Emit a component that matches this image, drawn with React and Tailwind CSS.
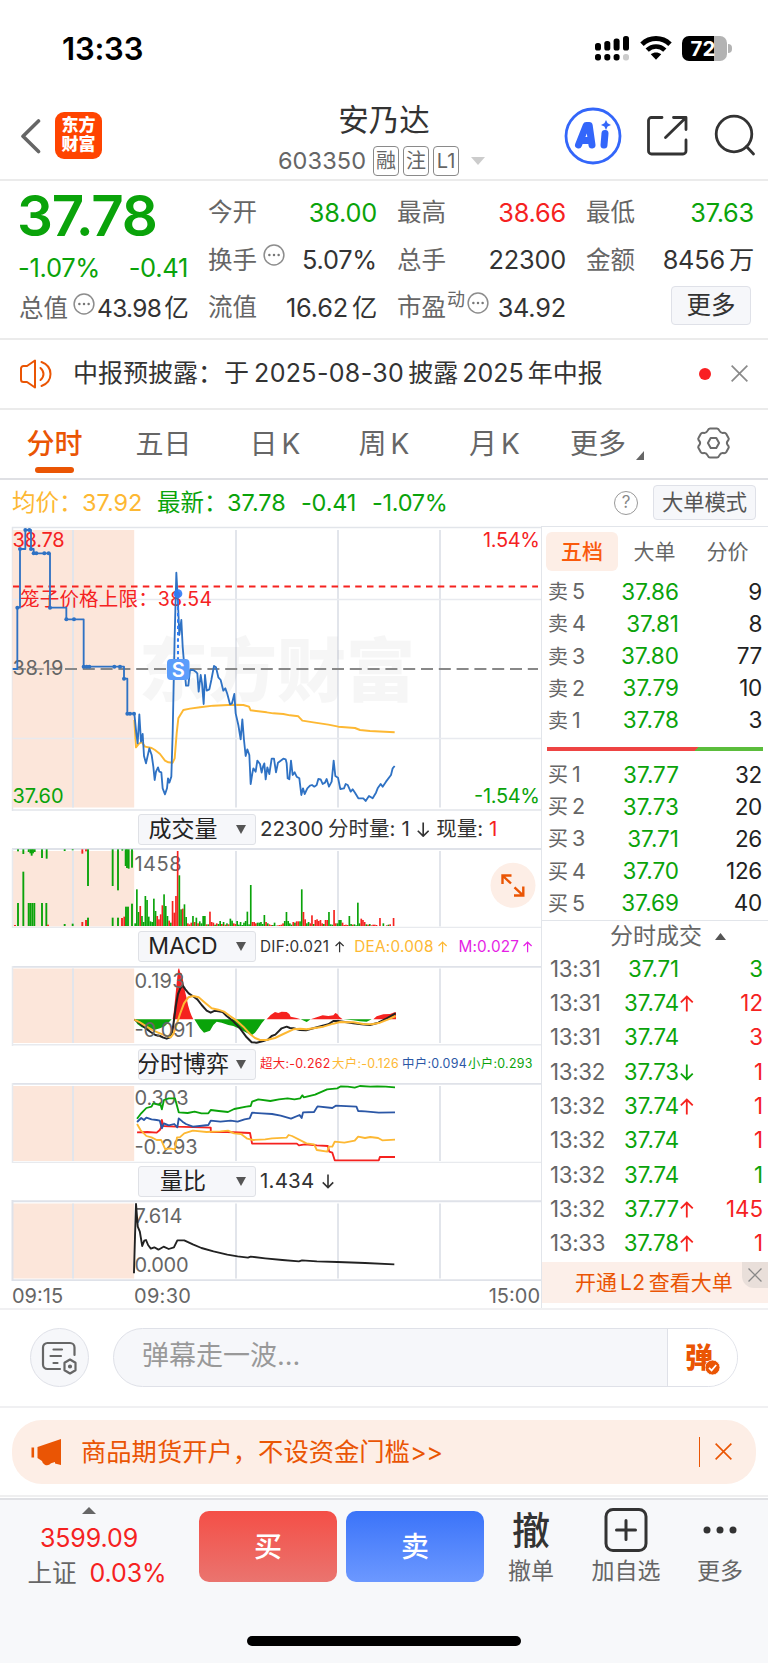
import React from "react";

const GREEN = "#0aa30a";
const RED = "#f5221f";

/* ---------- icons ---------- */

function Signal() {
  return (
    <svg width="34" height="25" viewBox="0 0 34 25">
      {[0, 9.3, 18.6, 28].map((x, i) => {
        const top = [7, 5, 2.6, 0][i];
        return <rect key={x} x={x} y={top} width="6" height={14.5 - top} rx="2.6" fill="#000" />;
      })}
      {[0, 9.3, 18.6, 28].map((x, i) => (
        <rect key={x} x={x} y="18" width="6" height="6.4" rx="2.6" fill={i === 3 ? "#ccc" : "#000"} />
      ))}
    </svg>
  );
}

function Wifi() {
  return (
    <svg width="32" height="24" viewBox="0 0 32 24" fill="none" stroke="#000">
      <path d="M2 8.2C10 .6 22 .6 30 8.2" strokeWidth="5" />
      <path d="M7.2 14.2c5-4.9 12.600-4.900 17.600 0" strokeWidth="4.600" />
      <path d="M10.800 18.300c3-2.500 7.400-2.500 10.400 0L16 23.800z" fill="#000" stroke="none" />
    </svg>
  );
}

function MoreDots() {
  return (
    <svg width="22" height="22" viewBox="0 0 22 22" className="shrink-0">
      <circle cx="11" cy="11" r="9.900" fill="none" stroke="#8d8d8d" strokeWidth="1.500" />
      <circle cx="6.400" cy="11" r="1.250" fill="#777" />
      <circle cx="11" cy="11" r="1.250" fill="#777" />
      <circle cx="15.600" cy="11" r="1.250" fill="#777" />
    </svg>
  );
}

function Cross({ size, color, w = 1.6 }) {
  return (
    <svg width={size} height={size} viewBox="0 0 16 16" fill="none" stroke={color} strokeWidth={w}>
      <path d="M.6.6l14.800 14.800M15.400.6L.6 15.400" />
    </svg>
  );
}

function Gear() {
  return (
    <svg width="33" height="32" viewBox="0 0 33 32" fill="none" stroke="#6b6b6b" strokeWidth="2" strokeLinejoin="round">
      <path d="M13 1.500h7c1.300 0 1.900 1 2.400 2.200.7 1.500 2 2.400 3.700 2.200 1.400-.2 2.500-.2 3.200 1l2.200 4c.7 1.200.1 2.100-.8 3.100-1 1.200-1 2.800 0 4 .9 1 1.500 1.900.8 3.100l-2.200 4c-.7 1.200-1.800 1.200-3.200 1-1.700-.2-3 .7-3.700 2.200-.5 1.200-1.100 2.200-2.400 2.200h-7c-1.300 0-1.900-1-2.400-2.200-.7-1.500-2-2.400-3.700-2.200-1.400.2-2.500.2-3.200-1l-2.200-4c-.7-1.200-.1-2.100.8-3.100 1-1.200 1-2.800 0-4-.9-1-1.500-1.900-.8-3.100l2.200-4c.7-1.200 1.800-1.200 3.200-1 1.700.2 3-.7 3.700-2.200.5-1.200 1.100-2.200 2.400-2.200z" />
      <path d="M13.700 11h5.600l2.800 5-2.800 5h-5.600l-2.800-5z" />
    </svg>
  );
}

function Arrow({ up, color, size = 16 }) {
  return (
    <svg width={size * 0.8} height={size} viewBox="0 0 12.800 16" fill="none" stroke={color} strokeWidth="1.700" className="shrink-0">
      {up ? <path d="M6.400 15.600V1.400M.8 7l5.600-5.600L12 7" /> : <path d="M6.400.4v14.200M.8 9l5.600 5.600L12 9" />}
    </svg>
  );
}

/* ---------- header ---------- */

function StatusBar() {
  return (
    <div className="flex h-[98px] items-center pl-[62px] pr-[36px]">
      <div className="text-[31px] font-semibold leading-none tracking-[-0.200px] text-black">13:33</div>
      <div className="ml-auto flex items-center">
        <Signal />
        <div className="ml-[11px] mt-[-1px]"><Wifi /></div>
        <div className="ml-[10px] flex h-[25px] w-[45px] items-center justify-center overflow-hidden rounded-[7px] bg-[linear-gradient(90deg,#000_72%,#b3b3b3_72%)] pr-[3px] text-[20.500px] font-bold leading-none text-white">72</div>
        <div className="ml-[1px] h-[9px] w-[4px] rounded-r-full bg-[#b3b3b3]" />
      </div>
    </div>
  );
}

function TitleBar() {
  return (
    <div className="flex h-[83px] border-b-2 border-[#ebebeb] pl-[20px]">
      <div className="flex w-[244px] pt-[14px]">
        <svg width="21" height="48" viewBox="0 0 21 48" fill="none" stroke="#666" strokeWidth="3.600" strokeLinecap="round">
          <path d="M18.500 9L3 24.300 18.500 39.500" strokeLinejoin="round" />
        </svg>
        <div className="ml-[14px] flex h-[47px] w-[47px] flex-col items-center justify-center rounded-[9px] bg-[#ff4400] text-[17px] font-black leading-[19.500px] text-white">
          <span>东方</span>
          <span>财富</span>
        </div>
      </div>
      <div className="flex w-[240px] flex-col items-center">
        <div className="mt-[5px] text-[30.500px] leading-[34px] text-[#333]">安乃达</div>
        <div className="mt-[9px] flex h-[30px] items-center gap-[4px] pr-[5px] text-[#666]">
          <span className="mr-[3px] text-[23.500px] leading-none tracking-[0.1px]">603350</span>
          {["融", "注", "L1"].map((t) => (
            <span key={t} className="flex h-[30px] w-[26px] items-center justify-center rounded-[4px] border-[1.500px] border-[#8a8a8a] text-[20px] leading-none">{t}</span>
          ))}
          <svg width="14" height="8" viewBox="0 0 14 8" className="ml-[8px]"><path d="M0 0h14L7 8z" fill="#ccc" /></svg>
        </div>
      </div>
      <div className="flex w-[264px] pl-[60px] pt-[9px]">
        <svg width="58" height="58" viewBox="0 0 58 58" fill="none" className="shrink-0">
          <circle cx="29" cy="29" r="27" stroke="#3366fa" strokeWidth="2.800" />
          <g stroke="#3366fa" strokeWidth="7" strokeLinejoin="round" strokeLinecap="round">
            <path d="M14.500 38l7.700-19.500h3l2.800 19.500M19.500 33.500h7" />
            <path d="M41 26.500l-1 11.500" />
          </g>
          <path d="M42 13l1.600 3.300 3.400 1.600-3.400 1.700-1.600 3.300-1.600-3.300-3.400-1.700 3.400-1.600z" fill="#3366fa" />
        </svg>
        <svg width="42" height="42" viewBox="0 0 42 42" className="ml-[24px] mt-[8px] shrink-0" fill="none" stroke="#333" strokeWidth="2.800" strokeLinecap="round" strokeLinejoin="round">
          <path d="M16 2.500H5.500a3 3 0 0 0-3 3v30.500a3 3 0 0 0 3 3H37a3 3 0 0 0 3-3V25" />
          <path d="M27.500 2.500H40V14.500M39.500 3L19.500 22.500" />
        </svg>
        <svg width="42" height="42" viewBox="0 0 42 42" className="ml-[26px] mt-[7px] shrink-0" fill="none" stroke="#333" strokeWidth="2.800" strokeLinecap="round">
          <circle cx="20" cy="20" r="17.800" />
          <path d="M32.500 32.500l7 7.500" />
        </svg>
      </div>
    </div>
  );
}

function Field({ label, value, color = "text-[#333]", icon, sup }) {
  return (
    <div className="flex h-[47.500px] items-center whitespace-nowrap">
      <span className="text-[24.500px] leading-none text-[#666]">{label}</span>
      {sup && <span className="mb-[15px] ml-[1px] text-[18px] leading-none text-[#666]">{sup}</span>}
      {icon && <span className={sup ? "mb-[9px] ml-[2px]" : "mb-[9px] ml-[6px]"}><MoreDots /></span>}
      <span className={"ml-auto text-[25.300px] leading-none tracking-[-0.2px] " + color}>{value}</span>
    </div>
  );
}

function Quote() {
  return (
    <div className="grid h-[160px] grid-cols-[169px_169px_169px_168px] gap-x-5 border-b-2 border-[#ebebeb] pl-[19px] pt-[8px]">
      <div className="flex flex-col whitespace-nowrap">
        <div className="ml-[-2px] flex h-[56px] items-center text-[56.500px] font-semibold leading-none tracking-[-1.300px] text-[#0aa30a]">37.78</div>
        <div className="ml-[-1px] flex h-[46px] items-center justify-between text-[25.500px] leading-none tracking-[-0.300px] text-[#0aa30a]">
          <span>-1.07%</span>
          <span>-0.41</span>
        </div>
        <div className="flex h-[36px] items-center">
          <span className="text-[24.500px] leading-none text-[#666]">总值</span>
          <span className="mb-[9px] ml-[5px]"><MoreDots /></span>
          <span className="ml-auto text-[24.500px] leading-none tracking-[-0.700px] text-[#333]">43.98<span className="ml-[3px]">亿</span></span>
        </div>
      </div>
      <div>
        <Field label="今开" value="38.00" color="text-[#0aa30a]" />
        <Field label="换手" value="5.07%" icon />
        <Field label="流值" value={<>16.62<span className="ml-[4px]">亿</span></>} />
      </div>
      <div>
        <Field label="最高" value="38.66" color="text-[#f5221f]" />
        <Field label="总手" value="22300" />
        <Field label="市盈" value="34.92" icon sup="动" />
      </div>
      <div>
        <Field label="最低" value="37.63" color="text-[#0aa30a]" />
        <Field label="金额" value={<>8456<span className="ml-[4px]">万</span></>} />
        <button className="ml-auto mr-[3px] mt-[2px] flex h-[39px] w-[80px] items-center justify-center rounded-[4px] border-[1.500px] border-[#dfe1e8] bg-[#f6f7fa] text-[24.500px] leading-none text-[#333]">更多</button>
      </div>
    </div>
  );
}

function Notice() {
  return (
    <div className="flex h-[70px] items-center whitespace-nowrap border-b-2 border-[#ebebeb] pb-px pl-[19px] pr-[20px]">
      <svg width="34" height="30" viewBox="0 0 34 30" fill="none" stroke="#ea5504" strokeWidth="2" strokeLinejoin="round" strokeLinecap="round">
        <path d="M8 7L16 1.500v27L8 23H4.500a2.500 2.500 0 0 1-2.500-2.500v-11A2.500 2.500 0 0 1 4.500 7z" />
        <path d="M21.500 9c4 3.500 4 8.500 0 12" />
        <path d="M22.500 3c12 4.500 12 19.500 0 24" />
      </svg>
      <div className="ml-[20px] flex items-center text-[25px] leading-none text-[#333]">
        <span>中报预披露：</span>
        <span className="ml-[1px]">于</span>
        <span className="ml-[5px] tracking-[0.350px]">2025-08-30</span>
        <span className="ml-[4px]">披露</span>
        <span className="ml-[4px]">2025</span>
        <span className="ml-[4px]">年中报</span>
      </div>
      <div className="ml-auto mr-[20px] h-[12px] w-[12px] rounded-full bg-[#f91f22]" />
      <Cross size={17} color="#8a8a8a" />
    </div>
  );
}

function Tabs() {
  return (
    <div className="flex h-[70px] border-b-2 border-[#dfe0e4] pt-[16px] text-[28px] leading-[36px] text-[#666]">
      <div className="flex w-[109px] flex-col items-center font-medium text-[#ea5504]">
        分时
        <div className="mt-[5px] h-[6px] w-[39px] rounded-full bg-[#ea5504]" />
      </div>
      <div className="w-[109px] text-center">五日</div>
      <div className="w-[114px] text-center">日<span className="ml-[4px]">K</span></div>
      <div className="w-[104px] text-center">周<span className="ml-[4px]">K</span></div>
      <div className="w-[117px] text-center">月<span className="ml-[4px]">K</span></div>
      <div className="ml-[17px] flex w-[126px]">
        更多
        <svg width="8" height="9" viewBox="0 0 8 9" className="ml-[10px] mt-[25px]"><path d="M8 0v9H0z" fill="#666" /></svg>
      </div>
      <div className="ml-[1px] mt-[1px]"><Gear /></div>
    </div>
  );
}

function InfoRow() {
  return (
    <div className="flex h-[46px] items-center whitespace-nowrap pl-[12px] pr-[12px] text-[23.500px] leading-none text-[#0aa30a]">
      <span className="w-[70px] text-[#fdb833]">均价：</span>
      <span className="w-[75px] text-[#fdb833]">37.92</span>
      <span className="w-[70px]">最新：</span>
      <span className="w-[74px]">37.78</span>
      <span className="w-[71px] tracking-[-0.200px]">-0.41</span>
      <span className="tracking-[-0.300px]">-1.07%</span>
      <span className="ml-auto mr-[15px] flex h-[24px] w-[24px] items-center justify-center rounded-full border-[1.500px] border-[#999] text-[17px] text-[#888]">?</span>
      <button className="flex h-[35px] w-[103px] items-center justify-center rounded-[4px] border-[1.500px] border-[#dfe1e8] bg-[#f6f7fa] text-[21.300px] text-[#555]">大单模式</button>
    </div>
  );
}

/* ---------- charts ---------- */

const PRE =
  "38,447 52,447 52,263 60,263 60,87 76,87 76,30 93,30 93,87 101,87 101,100 150,100 150,263 199,263 199,298 251,298 251,440 372,440 372,476 382,476 382,581 403,581";
const PRE_DOTS = [[52, 263], [60, 87], [76, 30], [88, 30], [93, 87], [101, 100], [109, 100], [133, 100], [146, 100], [150, 263], [199, 298], [222, 298], [251, 440], [260, 440], [268, 440], [343, 440], [360, 440], [372, 476], [382, 581], [390, 581], [402, 581]];
const PRICE =
  "403,581 405,600 409,640 413,670 418,583 423,665 428,642 432,708 438,730 448,685 455,705 460,740 464,780 468,755 474,742 478,755 484,757 488,805 495,823 501,805 504,775 508,788 514,770 518,640 524,350 529,158 534,250 538,345 544,300 548,380 553,440 558,497 565,497 570,450 580,450 587,455 592,460 596,515 602,465 606,490 611,552 615,465 620,512 628,508 634,480 642,438 648,442 655,472 662,480 670,512 676,505 682,522 690,553 696,550 703,522 707,580 715,615 722,658 727,598 732,660 737,708 742,688 748,705 752,792 757,760 760,745 767,755 772,722 780,732 785,758 789,740 793,730 797,778 802,742 808,762 815,716 822,716 828,757 834,728 842,722 850,716 857,718 860,730 863,775 868,778 873,722 878,765 884,757 890,770 898,775 904,825 909,805 914,822 922,805 930,797 936,795 943,800 950,795 955,777 962,778 968,792 975,788 980,777 987,800 995,785 1001,722 1006,768 1014,773 1021,807 1032,805 1037,792 1043,795 1052,815 1058,808 1065,818 1075,835 1090,835 1097,843 1107,828 1118,835 1128,818 1133,805 1142,792 1148,800 1158,785 1173,765 1178,745 1184,738";
const AVG =
  "403,600 408,682 415,673 425,666 435,680 455,684 465,690 480,702 495,722 505,727 518,728 524,715 530,640 535,595 550,570 570,566 600,562 640,557 700,554 730,555 747,560 752,571 800,577 820,580 850,582 870,586 895,589 907,602 945,608 985,614 1015,620 1065,624 1080,630 1110,633 1184,637";

function Grid({ top, bottom }) {
  return (
    <g>
      <rect x="12.500" y={top} width="121.700" height={bottom - top} fill="#fce6da" />
      <g fill="#e2e5eb">
        {[72, 235, 337, 439].map((x) => (
          <rect key={x} x={x} y={top} width="2" height={bottom - top} />
        ))}
      </g>
    </g>
  );
}

function Label({ x, y, fill = "#666", children, end, size = 20, len }) {
  return (
    <text x={x} y={y} fill={fill} fontSize={size} textAnchor={end ? "end" : "start"} textLength={len} lengthAdjust="spacing">
      {children}
    </text>
  );
}

function PriceChart() {
  return (
    <svg width="542" height="285" viewBox="0 526 542 285" className="block">
      <path d="M12.500 811V527.500H542" fill="none" stroke="#e2e5ea" strokeWidth="1.500" />
      <Grid top={530} bottom={807.500} />
      <path d="M13 599.500H542M13 738.500H542" stroke="#e8eaef" strokeWidth="1.500" />
      <path d="M12 810H542" stroke="#e2e5ea" strokeWidth="1.500" />
      <text x="139" y="696" fontSize="69" fontWeight="900" fill="#000" opacity="0.030">东方财富</text>
      <path d="M13 586.500H538" stroke={RED} strokeWidth="2" strokeDasharray="6.500 5.300" />
      <path d="M65 669H538" stroke="#888" strokeWidth="2" strokeDasharray="12 5.800" />
      <path d="M14 669H64" stroke="#888" strokeWidth="1.500" strokeDasharray="12 5.800" />
      <Label x={12.500} y={547} fill={RED} len={52}>38.78</Label>
      <Label x={540} y={547} fill={RED} end len={57}>1.54%</Label>
      <Label x={12.500} y={675} len={51}>38.19</Label>
      <Label x={12.500} y={803} fill={GREEN} len={51}>37.60</Label>
      <Label x={540} y={803} fill={GREEN} end len={66}>-1.54%</Label>
      <Label x={20} y={606} fill={RED} size={19.500} len={192}>笼子价格上限：38.54</Label>
      <g transform="translate(0 520) scale(.33333)" fill="none" strokeLinejoin="round">
        <polyline points={AVG} stroke="#fdb833" strokeWidth="5.800" />
        <polyline points={PRE} stroke="#2f72c4" strokeWidth="5.500" />
        <g fill="#2f72c4">
          {PRE_DOTS.map(([x, y]) => <circle key={x + "-" + y} cx={x} cy={y} r="6" />)}
        </g>
        <polyline points={PRICE} stroke="#2f72c4" strokeWidth="5.500" />
        <path d="M534 222V420" stroke="#2f7df5" strokeWidth="6" strokeDasharray="10 9" />
        <circle cx="534" cy="221" r="13" fill="#2f7df5" opacity=".9" />
      </g>
      <rect x="167" y="659" width="22.500" height="21" rx="4" fill="#5b9dfb" />
      <text x="178.200" y="676.500" fontSize="20" fontWeight="600" fill="#fff" textAnchor="middle">S</text>
    </svg>
  );
}

/* one bar a minute from the open; negative heights are red */
const VOL = [
  8, 110, 42, -60, 30, 12, 90, 78, 28, 14, 12, 82, 45, -30, -20, -35, -62, 95, 60, 30, -16, 10, -75, -40, -90, -225, 152, 50, -52, 65,
  27, -8, -5, -10, 30, -12, 25, -8, 14, 8, 30, 30, -5, 5, -43, -12, -10, 4, -8, 6, 15, -6, 12, -4, 8, -5, 22, 16, -8, -6,
  15, 4, 12, 3, 10, 15, 43, 5, 123, -12, -12, -8, 10, 10, 12, 6, 33, -12, 8, -5, -3, 3, 10, 1, -2, -3, -4, -8, 15, 42,
  15, 8, 4, -12, 10, -14, -14, 14, 110, -42, -20, 8, 12, -8, -32, 6, -18, -20, -15, -18, -8, 6, -18, -18, 42, 5, 4, -48, -8, 8,
  18, 18, -10, -3, -4, -3, 30, 6, -4, 5, 2, 70, 8, -22, -18, -12, 5, -4, 6, -2, -4, -4, -3, 0, -24, 0, 8, 0, -2, 4, -5, 0, -24,
];
const PRE_TOP = [[54, 6], [70, 14], [86, 8], [91, 12], [95, 19], [99, 12], [104, 8], [126, 26], [140, 28], [194, 5], [218, 3], [247, -13], [258, -6], [264, 110], [338, 110], [354, 123], [367, 4], [377, 50], [381, 56], [386, 58], [396, 55]];
const PRE_BOTTOM = [[45, -3], [54, 69], [70, 163], [86, 69], [91, 69], [97, 69], [103, 69], [126, 69], [139, 69], [144, -4], [194, 6], [218, 7], [247, -12], [258, -18], [264, 25], [338, 25], [354, 25], [366, -24], [373, -28], [378, 58], [384, 58], [396, 67]];

function VolumeChart() {
  const c = (v) => (v < 0 ? RED : GREEN);
  return (
    <svg width="542" height="80" viewBox="0 848 542 80" className="block">
      <path d="M12 849H542" stroke="#dfe2e9" strokeWidth="2" />
      <Grid top={851} bottom={926.500} />
      <path d="M12.500 849V928M12 927.500H542" fill="none" stroke="#e8eaee" strokeWidth="1.500" />
      <Label x={134.500} y={870.500} len={47}>1458</Label>
      <g transform="translate(0 810) scale(.33333)">
        {PRE_TOP.map(([x, h]) => <rect key={x} x={x - 2.800} y="118" width="5.600" height={Math.abs(h)} fill={c(h)} />)}
        {PRE_BOTTOM.map(([x, h]) => <rect key={x} x={x - 2.800} y={348 - Math.abs(h)} width="5.600" height={Math.abs(h)} fill={c(h)} />)}
        {VOL.map((h, i) => <rect key={i} x={403 + 5.1 * i} y={348 - Math.abs(h)} width="5" height={Math.abs(h)} fill={c(h)} />)}
      </g>
      <circle cx="513" cy="885.300" r="22.500" fill="#fdeee6" />
      <g fill="none" stroke="#ea5504" strokeWidth="2.400">
        <path d="M511.500 875.500H502.500V884M502.500 875.500l8.500 8M514 895.500H523.300V886.500M523 895.300l-8.500-8" />
      </g>
    </svg>
  );
}

function MacdChart() {
  return (
    <svg width="542" height="80" viewBox="0 966 542 80" className="block">
      <path d="M12 966.800H542" stroke="#dfe2e9" strokeWidth="2" />
      <Grid top={968.500} bottom={1043} />
      <path d="M12.500 966V1046M12 1044.800H542" fill="none" stroke="#e8eaee" strokeWidth="1.500" />
      <g transform="translate(0 810) scale(.33333)" fill="none" strokeLinejoin="round">
        <path d="M403 628H515L505 638 495 648 480 655 462 660 445 658 425 652 412 642z" fill={GREEN} />
        <path d="M518 628L522 600 526 560 530 520 534 480 537 474 541 488 545 490 549 510 552 530 556 548 560 565 564 585 570 605 575 618 580 628z" fill={RED} />
        <path d="M583 628H795L785 640 775 655 765 668 755 676 740 668 715 655 700 648 685 645 665 638 650 635 640 645 630 662 612 668 600 655z" fill={GREEN} />
        <path d="M800 628L812 615 825 606 835 609 845 605 860 606 868 612 872 620 890 624 902 628z" fill={RED} />
        <path d="M902 628H932L920 636z" fill={GREEN} />
        <path d="M932 628L950 622 968 616 985 618 1000 616 1006 609 1012 612 1018 620 1028 628z" fill={RED} />
        <path d="M1030 628H1115L1100 635 1080 634 1060 631z" fill={GREEN} />
        <path d="M1120 628L1130 619 1150 613 1170 612 1184 607 1188 607V628z" fill={RED} />
        <path d="M403 629L415 636 425 645 437 655 452 666 466 675 480 678 490 683 500 686 510 682 517 665 522 630 528 585 534 552 541 535 548 526 556 538 566 550 578 558 592 568 605 585 620 602 632 608 645 602 655 604 668 606 680 618 700 634 720 655 740 682 755 697 770 698 790 693 805 688 815 678 826 674 845 655 860 650 870 654 880 655 900 660 918 661 940 655 965 648 985 643 1000 633 1015 633 1035 636 1060 640 1085 643 1110 645 1135 638 1160 625 1187 610" stroke="#222" strokeWidth="6" />
        <path d="M403 629L420 637 440 650 460 662 480 670 500 678 512 682 520 672 528 650 540 612 552 580 565 562 580 558 596 562 615 578 635 595 655 599 672 605 690 618 710 632 730 650 750 672 765 684 780 690 800 690 825 684 850 672 880 658 900 656 920 658 945 654 970 650 1000 641 1020 636 1060 637 1090 642 1115 643 1140 638 1165 628 1187 618" stroke="#fdb833" strokeWidth="6" />
      </g>
      <Label x={134.500} y={987.500} len={50}>0.193</Label>
      <Label x={134.500} y={1036.500} len={59}>-0.091</Label>
    </svg>
  );
}

function GameChart() {
  return (
    <svg width="542" height="80" viewBox="0 1083 542 80" className="block">
      <path d="M12 1083.800H542" stroke="#dfe2e9" strokeWidth="2" />
      <Grid top={1086} bottom={1161} />
      <path d="M12.500 1083V1163M12 1162.500H542" fill="none" stroke="#e8eaee" strokeWidth="1.500" />
      <Label x={134.500} y={1105} len={54}>0.303</Label>
      <Label x={134.500} y={1154} len={63}>-0.293</Label>
      <g transform="translate(0 1050) scale(.34438 .33333)" fill="none" strokeWidth="5.400" strokeLinejoin="round">
        <polyline stroke={RED} points="398,247 428,246 455,248 464,240 468,232 470,210 474,228 510,230 612,233 612,246 660,246 726,249 732,281 862,281 868,286 885,283 920,286 952,288 956,305 965,308 972,331 1100,331 1103,321 1147,321" />
        <polyline stroke="#fdb833" points="398,222 408,240 425,258 440,262 455,270 468,270 480,298 492,295 508,298 514,262 522,262 535,250 560,242 600,246 640,244 662,242 680,250 700,252 718,266 735,270 770,268 790,265 832,263 838,255 848,258 890,280 912,283 920,300 950,305 955,290 965,290 972,275 1000,278 1030,272 1040,260 1060,264 1075,261 1098,264 1110,271 1147,269" />
        <polyline stroke="#2b57a6" points="398,216 410,204 418,210 425,203 440,208 455,210 464,212 470,235 476,220 490,226 506,222 515,232 519,205 530,215 540,222 560,230 580,228 605,225 612,212 640,215 670,212 690,215 710,208 725,205 732,188 760,190 790,192 815,197 845,206 870,195 876,204 880,187 912,186 922,169 965,174 975,167 1035,170 1040,183 1060,184 1100,188 1147,187" />
        <polyline stroke={GREEN} points="398,206 410,190 425,174 440,170 445,160 462,165 465,160 470,178 476,150 490,145 508,145 519,187 545,189 565,185 585,190 605,190 612,180 635,183 662,186 680,177 715,170 728,168 732,155 750,148 785,153 810,148 835,145 855,148 872,145 878,136 882,142 915,134 950,118 980,115 990,109 1010,110 1030,113 1045,108 1075,110 1095,109 1120,110 1147,112" />
      </g>
    </svg>
  );
}

function RatioChart() {
  return (
    <svg width="542" height="81" viewBox="0 1200 542 81" className="block">
      <path d="M12 1201.300H542" stroke="#dfe2e9" strokeWidth="2" />
      <Grid top={1203.500} bottom={1278.500} />
      <path d="M12.500 1200V1281M12 1280.300H542" fill="none" stroke="#dfe2e9" strokeWidth="2" />
      <Label x={134.500} y={1222.500} len={48}>7.614</Label>
      <Label x={134.500} y={1272} len={54}>0.000</Label>
      <g transform="translate(0 1050) scale(.34438 .33333)" fill="none" strokeWidth="5.500" stroke="#222" strokeLinejoin="round">
        <polyline points="389,670 392,560 395,462 400,530 406,545 413,588 419,572 424,570 430,585 438,596 448,592 460,599 475,590 490,597 505,592 515,571 535,571 560,583 585,594 620,604 660,614 690,619 720,623 728,620 770,625 820,630 868,634 877,631 920,634 980,636 1060,639 1145,643" />
      </g>
    </svg>
  );
}

function Select({ children }) {
  return (
    <div className="ml-[138px] flex h-[31px] w-[118px] shrink-0 items-center justify-between overflow-hidden whitespace-nowrap rounded-[3px] border-[1.500px] border-[#dfe1e6] bg-[#f6f7fa] pr-[9px] text-[23px] leading-none text-[#222]">
      <span className="flex w-[88px] justify-center">{children}</span>
      <svg width="10" height="9" viewBox="0 0 10 9"><path d="M0 0h10L5 9z" fill="#555" /></svg>
    </div>
  );
}

function PanelHead({ title, children, h }) {
  return (
    <div className={"flex items-center whitespace-nowrap leading-none " + h}>
      <Select>{title}</Select>
      {children}
    </div>
  );
}

function Charts() {
  return (
    <div className="w-[541px] shrink-0 overflow-hidden">
      <PriceChart />
      <PanelHead title="成交量" h="h-[37px]">
        <div className="ml-[4px] flex items-center text-[20.500px] text-[#333]">
          <span className="w-[68px]">22300</span>
          <span>分时量:</span>
          <span className="ml-[6px] mr-[7px]">1</span>
          <Arrow color="#333" size={15.500} />
          <span className="ml-[7px]">现量:</span>
          <span className="ml-[6px] text-[#f5221f]">1</span>
        </div>
      </PanelHead>
      <VolumeChart />
      <PanelHead title="MACD" h="h-[38px]">
        <div className="ml-[4px] flex items-center text-[15.300px] tracking-[0.250px]">
          <span className="w-[75px] text-[#333]">DIF:0.021</span>
          <Arrow up color="#333" size={11.500} />
          <span className="ml-[10px] w-[84px] text-[#fdb833]">DEA:0.008</span>
          <Arrow up color="#fdb833" size={11.500} />
          <span className="ml-[11px] w-[65px] text-[#e51ee5]">M:0.027</span>
          <Arrow up color="#e51ee5" size={11.500} />
        </div>
      </PanelHead>
      <MacdChart />
      <PanelHead title="分时博弈" h="h-[37px]">
        <div className="ml-[4px] flex items-center text-[12.400px] tracking-[0.300px]">
          <span className="w-[72px] text-[#f5221f]">超大:-0.262</span>
          <span className="w-[70px] text-[#fdb833]">大户:-0.126</span>
          <span className="w-[66px] text-[#2b57a6]">中户:0.094</span>
          <span className="text-[#0aa30a]">小户:0.293</span>
        </div>
      </PanelHead>
      <GameChart />
      <PanelHead title="量比" h="h-[37px]">
        <div className="ml-[4px] flex items-center text-[20.500px] tracking-[0.200px] text-[#333]">
          <span className="mr-[8px]">1.434</span>
          <Arrow color="#333" size={15} />
        </div>
      </PanelHead>
      <RatioChart />
      <div className="flex h-[27px] items-center pl-[12px] text-[20px] leading-none text-[#666]">
        <span className="w-[122px] pt-[4px]">09:15</span>
        <span className="pt-[4px] tracking-[0.300px]">09:30</span>
        <span className="ml-auto pr-[1px] pt-[4px]">15:00</span>
      </div>
    </div>
  );
}

/* ---------- order book ---------- */

const SELLS = [["5", "37.86", "9"], ["4", "37.81", "8"], ["3", "37.80", "77"], ["2", "37.79", "10"], ["1", "37.78", "3"]];
const BUYS = [["1", "37.77", "32"], ["2", "37.73", "20"], ["3", "37.71", "26"], ["4", "37.70", "126"], ["5", "37.69", "40"]];
const TRADES = [
  ["13:31", "37.71", "", "3", 0],
  ["13:31", "37.74", "u", "12", 1],
  ["13:31", "37.74", "", "3", 1],
  ["13:32", "37.73", "d", "1", 1],
  ["13:32", "37.74", "u", "1", 1],
  ["13:32", "37.74", "", "1", 1],
  ["13:32", "37.74", "", "1", 0],
  ["13:32", "37.77", "u", "145", 1],
  ["13:33", "37.78", "u", "1", 1],
];

function Level({ side, row }) {
  return (
    <div className="flex h-[32.200px] items-center pl-[6px] pr-[6px] text-[22.500px] leading-none">
      <span className="w-[50px] text-[20px] text-[#666]">{side}<span className="ml-[4px] text-[21.500px]">{row[0]}</span></span>
      <span className="w-[81px] text-right text-[#0aa30a]">{row[1]}</span>
      <span className="ml-auto tracking-[-0.300px] text-[#222]">{row[2]}</span>
    </div>
  );
}

function OrderBook() {
  return (
    <div className="flex w-[227px] flex-col">
      <div className="h-[394px] border-l-[1.500px] border-t-[1.500px] border-[#e2e5ea]">
        <div className="flex pl-[4px] pt-[5px] text-[21px] leading-[39px] text-[#666]">
          <span className="w-[72px] rounded-[6px] bg-[#fdeee6] text-center font-medium text-[#fa5a0c]">五档</span>
          <span className="w-[73px] text-center">大单</span>
          <span className="w-[73px] text-center">分价</span>
        </div>
        <div className="pt-[5px]">{SELLS.map((r) => <Level key={r[0]} side="卖" row={r} />)}</div>
        <div className="ml-[5px] mt-[10px] h-[4px] w-[216px] bg-[linear-gradient(135deg,#ee4443_69%,#5bbd3c_69%)]" />
        <div className="pt-[8px]">{BUYS.map((r) => <Level key={r[0]} side="买" row={r} />)}</div>
      </div>
      <div className="h-[388px] border-l-[1.500px] border-t-[1.500px] border-[#e2e5ea]">
        <div className="flex h-[31px] items-center pl-[68px] text-[23px] leading-none text-[#666]">
          分时成交
          <svg width="11" height="7" viewBox="0 0 11 7" className="ml-[13px]"><path d="M0 7h11L5.500 0z" fill="#555" /></svg>
        </div>
        {TRADES.map(([t, p, dir, n, red], i) => (
          <div key={i} className="flex h-[34.300px] items-center pl-[8px] pr-[5px] text-[22.300px] leading-none">
            <span className="w-[60px] tracking-[-0.300px] text-[#666]">{t}</span>
            <span className="w-[69px] text-right tracking-[-0.100px] text-[#0aa30a]">{p}</span>
            <span className="ml-[1px] mt-[1px] w-[14px]">{dir && <Arrow up={dir === "u"} color={dir === "u" ? RED : GREEN} size={17} />}</span>
            <span className={red ? "ml-auto text-[#f5221f]" : "ml-auto text-[#0aa30a]"}>{n}</span>
          </div>
        ))}
        <div className="mt-[1px] flex h-[41px] bg-[#fcefe9] text-[#ea5504]">
          <span className="ml-[33px] flex items-center whitespace-nowrap text-[21px] leading-none">开通<span className="mx-[3px] tracking-[0.500px]">L2</span>查看大单</span>
          <span className="ml-auto flex h-[26px] w-[26px] items-center justify-center rounded-bl-[12px] bg-[#e9dfda]"><Cross size={14} color="#888" w={1.500} /></span>
        </div>
      </div>
    </div>
  );
}

/* ---------- bottom ---------- */

function Danmu() {
  return (
    <div className="flex h-[100px] items-center border-y-2 border-[#f0f0f2] pl-[30px]">
      <div className="flex h-[59px] w-[59px] items-center justify-center rounded-full border-[1.500px] border-[#dfe1e8] bg-[#f6f7fa]">
        <svg width="37" height="34" viewBox="0 0 37 34" fill="none" stroke="#666" strokeWidth="2.200" strokeLinecap="round" strokeLinejoin="round">
          <path d="M19 28H6.500a4.500 4.500 0 0 1-4.500-4.500V6.500A4.500 4.500 0 0 1 6.500 2H29a4.500 4.500 0 0 1 4.500 4.500V14" />
          <path d="M12.500 8.500h8.500M9.500 15h10.500M12.500 22h4" />
          <path d="M29 18.500l5.500 3.300v7.400L29 32.500l-5.500-3.300v-7.400z" />
          <circle cx="29" cy="25.500" r="1" fill="#666" />
        </svg>
      </div>
      <div className="ml-[24px] flex h-[59px] w-[625px] overflow-hidden rounded-full border-[1.500px] border-[#dfe1e8] bg-[#f6f7fa]">
        <div className="flex flex-1 items-center pb-[5px] pl-[28px] text-[27px] leading-none text-[#999]">弹幕走一波...</div>
        <div className="flex w-[70px] items-center border-l-[1.500px] border-[#dfe1e8] bg-white pl-[17px]">
          <span className="text-[28px] font-black leading-none text-[#ea5504]">弹</span>
          <svg width="15" height="15" viewBox="0 0 15 15" className="relative left-[-8px] top-[10px]">
            <circle cx="7.500" cy="7.500" r="7.500" fill="#ea5504" stroke="#fff" strokeWidth="0.800" />
            <path d="M4 7.800l2.600 2.600L11.200 5" fill="none" stroke="#fff" strokeWidth="1.700" />
          </svg>
        </div>
      </div>
    </div>
  );
}

function Promo() {
  return (
    <div className="h-[88px] px-[12px] pt-[12px]">
      <div className="flex h-[64px] items-center rounded-[30px] bg-[#fdeee6] pl-[18px] pr-[24px] text-[#ea5504]">
        <svg width="32" height="28" viewBox="0 0 32 28" fill="#ea5504">
          <path d="M1.500 9.500h2.600v10H1.500zM7.500 9L31 1v26l-6-1.500v-1.500l-4 1.200-1.500 1.300a5 5 0 0 1-7.500-3.500L7.500 20z" />
        </svg>
        <span className="ml-[19px] whitespace-nowrap text-[25.300px] leading-none">商品期货开户，不设资金门槛<span className="tracking-[-0.300px]">&gt;&gt;</span></span>
        <span className="ml-auto mr-[15px] h-[30px] w-[1.500px] bg-[#ea5504]" />
        <Cross size={17} color="#ea5504" w={1.500} />
      </div>
    </div>
  );
}

function Action({ icon, label, w }) {
  return (
    <div className={"flex flex-col items-center " + w}>
      <div className="flex h-[46px] items-center justify-center">{icon}</div>
      <div className="mt-[5px] whitespace-nowrap text-[23px] leading-[26px] text-[#666]">{label}</div>
    </div>
  );
}

function Footer() {
  return (
    <div className="flex h-[168px] flex-col bg-[#f7f8fa]">
      <div className="h-[2px] bg-[#efeff0]" />
      <div className="h-[1px] bg-white" />
      <div className="h-[2px] bg-[#e0e1e5]" />
      <div className="flex h-[97px]">
        <div className="flex w-[199px] flex-col items-center whitespace-nowrap pr-[21px] pt-[7px]">
          <svg width="14" height="7" viewBox="0 0 14 7"><path d="M0 7h14L7 0z" fill="#666" /></svg>
          <div className="mt-[11px] text-[25px] leading-[26px] tracking-[-0.100px] text-[#f5221f]">3599.09</div>
          <div className="mt-[9px] flex items-center pl-[16px] text-[24.500px] leading-[26px] text-[#666]">上证<span className="ml-[13px] text-[25px] tracking-[-0.100px] text-[#f5221f]">0.03%</span></div>
        </div>
        <button className="mt-[11px] h-[71px] w-[138px] rounded-[10px] bg-[linear-gradient(180deg,#f44f47,#ea746f)] text-[28px] font-medium text-white">买</button>
        <button className="ml-[9px] mt-[11px] h-[71px] w-[138px] rounded-[10px] bg-[linear-gradient(180deg,#3b74f9,#6c98ff)] text-[28px] font-medium text-white">卖</button>
        <div className="flex pt-[7px]">
          <Action w="ml-[14px] w-[66px]" label="撤单" icon={<span className="text-[38px] font-medium leading-none text-[#333]">撤</span>} />
          <Action
            w="ml-[18px] w-[88px]"
            label="加自选"
            icon={
              <svg width="44" height="44" viewBox="0 0 44 44" fill="none" stroke="#333" strokeWidth="3" strokeLinecap="round">
                <rect x="2" y="1.500" width="40" height="41" rx="7" />
                <path d="M22 12.500v19M12.500 22h19" />
              </svg>
            }
          />
          <Action
            w="ml-[13px] w-[74px]"
            label="更多"
            icon={
              <svg width="34" height="8" viewBox="0 0 34 8" fill="#333">
                <circle cx="4" cy="4" r="3.500" /><circle cx="17" cy="4" r="3.500" /><circle cx="30" cy="4" r="3.500" />
              </svg>
            }
          />
        </div>
      </div>
      <div className="mx-auto mt-[39px] h-[10px] w-[274px] rounded-full bg-black" />
    </div>
  );
}

export default function App() {
  return (
    <div className="flex h-[1663px] w-[768px] flex-col overflow-hidden bg-white font-['Inter','Noto_Sans_CJK_SC',sans-serif]">
      <StatusBar />
      <TitleBar />
      <Quote />
      <Notice />
      <Tabs />
      <InfoRow />
      <div className="flex h-[782px]">
        <Charts />
        <OrderBook />
      </div>
      <Danmu />
      <Promo />
      <Footer />
    </div>
  );
}
